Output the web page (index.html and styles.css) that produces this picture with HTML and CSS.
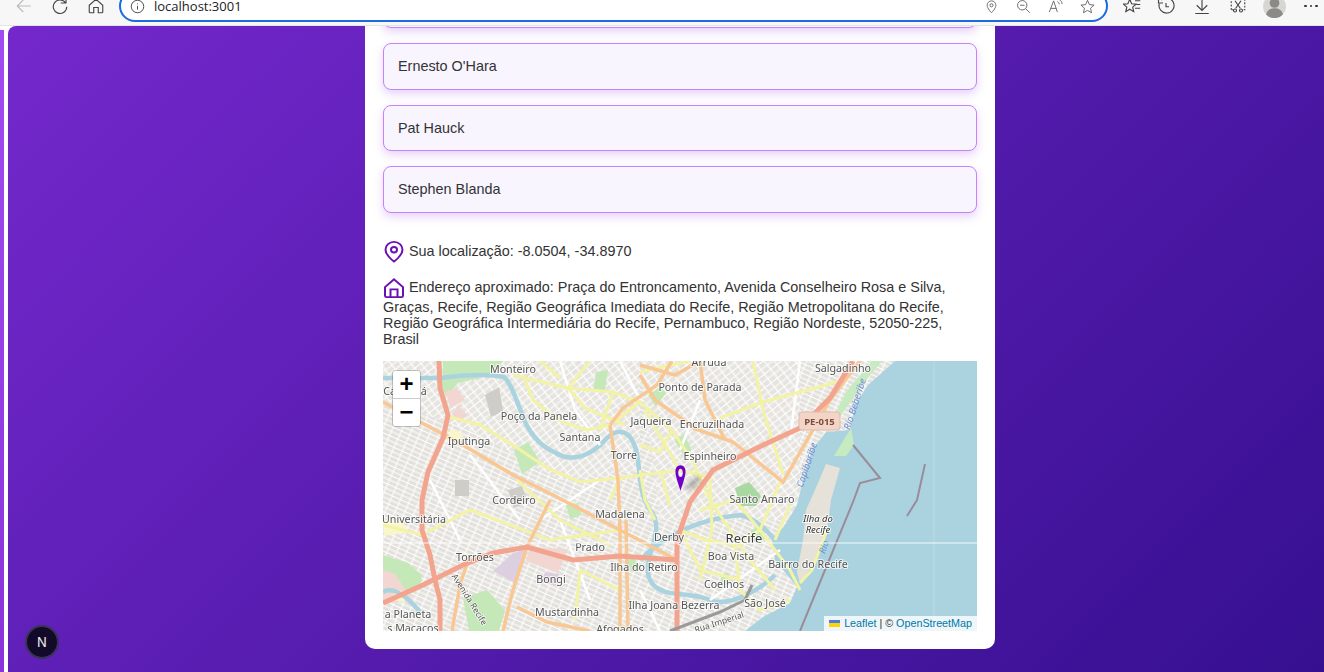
FILE: index.html
```html
<!DOCTYPE html>
<html lang="en">
<head>
  <meta charset="UTF-8">
  <title>localhost:3001</title>
  <link rel="stylesheet" href="styles.css">
</head>
<body>

<header class="toolbar">
  <div class="toolbar-row">
    <svg class="tool tool-back" viewBox="0 0 24 24"><path d="M21 12H4M11 4l-8 8 8 8"/></svg>
    <svg class="tool tool-reload" viewBox="0 0 24 24"><path d="M19.5 8A9 9 0 1 0 21 13M20 1v7h-7"/></svg>
    <svg class="tool tool-home" viewBox="0 0 24 24"><path d="M3 11l9-8 9 8v9a1 1 0 0 1-1 1h-5v-7H9v7H4a1 1 0 0 1-1-1z"/></svg>
    <div class="address">
      <svg class="tool-small" viewBox="0 0 24 24"><circle cx="12" cy="12" r="10"/><path d="M12 11v6M12 7v1.5"/></svg>
      <span class="url">localhost:3001</span>
      <div class="address-actions">
        <svg class="tool-small" viewBox="0 0 24 24"><path d="M12 22s-7-7-7-12a7 7 0 0 1 14 0c0 5-7 12-7 12z"/><circle cx="12" cy="10" r="2.5"/></svg>
        <svg class="tool-small" viewBox="0 0 24 24"><circle cx="10" cy="10" r="7.5"/><path d="M6.500 10h7M15.500 15.500L22 22"/></svg>
        <svg class="tool-small" viewBox="0 0 24 24"><path d="M2 21L9 3l6 18M4.500 15h9M15 4c2 1 3 2.500 3 4.500M18 1c3 1.500 4.500 4 4.500 7"/></svg>
        <svg class="tool-small" viewBox="0 0 24 24"><path d="M12 2l3 7 7.500.7-5.700 5 1.700 7.300-6.500-3.800L5.500 22l1.700-7.300-5.700-5L9 9z"/></svg>
      </div>
    </div>
    <svg class="tool tool-fav" viewBox="0 0 24 24"><path d="M9 3l2.500 6 6 .5-4.600 4 1.400 6L9 16.300 3.700 19.500l1.400-6-4.600-4 6-.5zM16 5h7M18 10h5M16 15h7"/></svg>
    <svg class="tool tool-history" viewBox="0 0 24 24"><path d="M6 4a10 10 0 1 1-3 5M2 2v6h6M12 8v5h4"/></svg>
    <svg class="tool tool-download" viewBox="0 0 24 24"><path d="M12 2v16M5 11l7 7 7-7M3 22h18"/></svg>
    <svg class="tool tool-shot" viewBox="0 0 24 24"><path class="dashed" d="M3 17V3h18v14h-3M6 17H3"/><path d="M8 5l7 10M16 5L9 15"/><circle cx="8" cy="18" r="2"/><circle cx="16" cy="18" r="2"/></svg>
    <div class="avatar">
      <svg viewBox="0 0 26 26"><circle cx="13" cy="13" r="13" fill="#d8d6d2"/><circle cx="13" cy="9" r="5.500" fill="#8c8a87"/><path d="M3.500 22c1-5 5-7 9.500-7s8.500 2 9.500 7a13 13 0 0 1-19 0z" fill="#8c8a87"/></svg>
      <span class="avatar-dot"></span>
    </div>
    <div class="more"><i></i><i></i><i></i></div>
  </div>
</header>

<div class="window">
  <div class="edge"></div>
  <main class="page">
    <div class="card">

      <ul class="people">
        <li>Hidden</li>
        <li>Ernesto O'Hara</li>
        <li>Pat Hauck</li>
        <li>Stephen Blanda</li>
      </ul>

      <p class="info info-location">
        <svg class="info-icon" viewBox="0 0 22 24" preserveAspectRatio="none"><path d="M11 22.500S2.500 15.500 2.500 9.500a8.500 8.500 0 0 1 17 0c0 6-8.500 13-8.500 13z"/><circle cx="11" cy="9.500" r="3"/></svg>
        Sua localização: -8.0504, -34.8970
      </p>

      <p class="info info-address">
        <svg class="info-icon" viewBox="0 0 22 24" preserveAspectRatio="none"><path d="M2 11l9-8.500 9 8.500v9.500a1.500 1.500 0 0 1-1.500 1.500h-15A1.500 1.500 0 0 1 2 20.500zM7.500 22v-8.500h7V22"/></svg>
        Endereço aproximado: Praça do Entroncamento, Avenida Conselheiro Rosa e Silva, Graças, Recife, Região Geográfica Imediata do Recife, Região Metropolitana do Recife, Região Geográfica Intermediária do Recife, Pernambuco, Região Nordeste, 52050-225, Brasil
      </p>

      <div class="map">
        <svg class="map-tiles" viewBox="383 361 594 270" preserveAspectRatio="none">
          <defs>
            <pattern id="streets" width="9" height="9" patternUnits="userSpaceOnUse" patternTransform="rotate(24)">
              <rect width="9" height="9" fill="#e3e1dc"/>
              <path d="M0 1h9M0 5.500h9M2 0v9" stroke="#fff" stroke-width="1.100"/>
            </pattern>
            <pattern id="streets2" width="8" height="11" patternUnits="userSpaceOnUse" patternTransform="rotate(-38)">
              <rect width="8" height="11" fill="#e6e4df"/>
              <path d="M0 1h8M0 6.500h8M4 0v11" stroke="#fff" stroke-width="1.200"/>
            </pattern>
          </defs>

          <rect x="383" y="361" width="594" height="270" fill="url(#streets)"/>
          <path d="M383 361H640V470L560 480 470 430 383 400z" fill="url(#streets2)"/>
          <path d="M640 361H800V520H660z" fill="url(#streets2)"/>

          <g class="areas">
            <path class="park" d="M443 361h60l-10 14-35 8-12 14-4-10z"/>
            <path class="park" d="M383 555l25 8 14 12-2 14-25 8-12 2z"/>
            <path class="park" d="M463 598l24-8 18 20-6 21h-30z"/>
            <path class="park" d="M514 450l14-8 12 20-18 12z"/>
            <path class="park-dark" d="M401 385h10v34h-10z"/>
            <path class="park-dark" d="M735 488l14-6 12 14-5 10-16 0z"/>
            <path class="park" d="M596 372l12-2-3 20-12 2z"/>
            <path class="park" d="M648 395l12-8 6 6-10 14z"/>
            <path class="park" d="M674 440l10-6 8 16-8 6z"/>
            <path class="park" d="M750 530l12-4 4 12-10 6z"/>
            <path class="park" d="M566 505l12-2 4 12-12 4zM470 372l8-2 2 8-8 2zM720 575l8-2 2 8-8 2zM626 560l8-2 8 12-10 2z"/>
            <path class="pink" d="M445 392l12-4 8 12-14 8zM458 405l9 10-8 8-7-8z"/>
            <path class="pink" d="M530 547l38 2-10 24-32-12z"/>
            <path class="pink" d="M383 570l12 4 18 26-30 4z"/>
            <path class="lilac" d="M513 553l14-4-12 34-22-12z"/>
            <path class="lilac" d="M545 572l14 2-2 12-16-4z"/>
            <path class="yellow" d="M452 428l12 8-10 10-8-6zM383 520h18l8 12-25 4zM396 590l12 2-4 10-12-2z"/>
            <path class="grey" d="M455 480h14v16h-14zM508 490l14-4 6 16-14 6zM485 395l14-8 4 24-12 6z"/>
          </g>

          <path class="sea" d="M895 361H977V631H745L763 617 790 603 797 587 775 560 772 540 785 525 797 505 803 480 812 450 826 432 850 430 855 405 868 385z"/>
          <path class="port" d="M826 464L840 468 831 500 827 530 813 565 800 583 797 572 803 540 806 510 815 490z"/>
          <path class="green-coast" d="M838 420L862 385 882 361H872L846 392 832 420zM834 456L851 428 854 445 846 456z"/>

          <g class="rivers">
            <path d="M383 378H440C470 374 490 374 504 377 512 384 516 400 522 414 528 432 540 446 556 453 570 462 590 458 607 438 618 428 628 430 634 444 642 462 636 490 650 510 668 530 640 560 650 580 660 600 690 590 710 600 728 608 760 590 775 575"/>
            <path d="M640 560C660 540 690 520 740 515 760 520 770 535 775 540"/>
            <path d="M383 592C395 585 410 600 420 612"/>
          </g>

          <g class="road-small">
            <path d="M560 361L575 410 600 445M470 455L520 520M540 520L600 480M620 361L640 400M560 520L590 600M640 590L660 631M700 400L680 450M800 361L790 440M430 480L460 540M710 600L780 550"/>
          </g>

          <g class="road-yellow">
            <path d="M450 417L480 425 513 445 547 468 580 482 620 478 680 470 712 478"/>
            <path d="M513 375L567 388 613 392 640 402 672 430 692 460 710 500 730 530 750 560 775 590"/>
            <path d="M523 375L533 400 557 420 587 430 610 425 640 402"/>
            <path d="M560 378L540 361M590 361L568 388 585 408 625 425M613 392L600 430"/>
            <path d="M753 361L763 410 783 475"/>
            <path d="M720 418L763 402 837 382"/>
            <path d="M690 361L640 372M640 470L645 500 655 520M660 470L670 505"/>
            <path d="M780 482L760 530 735 545 705 540 680 530M735 545L740 590 760 610 790 600M760 530L790 570 800 590"/>
            <path d="M710 480L712 530 700 580M680 530L700 570 740 580M790 505L775 540"/>
            <path d="M383 525L422 535 470 510 550 540 620 530M517 480L560 520 610 545M580 570L575 620M580 570L620 590"/>
            <path d="M827 530L812 570 800 583"/>
            <path d="M640 445L660 452 672 430M645 410L665 445 680 470M620 478L610 500M700 510L735 500 760 530"/>
          </g>

          <g class="road-orange">
            <path d="M383 402L463 445 513 475 553 495 620 530 677 560"/>
            <path d="M550 500L527 547 513 590 503 631"/>
            <path d="M517 607L547 622 590 631"/>
            <path d="M640 365L675 375 700 361"/>
            <path d="M700 361L705 400 725 440M693 428L733 442 753 458 783 482 830 400 860 361"/>
            <path d="M610 425L623 408 657 385 672 361M610 425L618 480 620 530 620 631M626 520L628 631"/>
            <path d="M640 375L655 400 695 428"/>
            <path d="M470 555L460 585 452 631"/>
          </g>

          <g class="road-motor">
            <path d="M439 361L440 388 448 415 443 438 428 472 422 500 422 530 430 555 435 580 440 600 440 631"/>
            <path d="M383 603L423 585 463 565 493 553 527 547 573 560 620 556 677 560"/>
            <path d="M677 631V540L690 502 713 470 757 448 800 428 830 398 853 361"/>
          </g>

          <g class="road-grey">
            <path d="M670 631L720 612 745 600 752 585"/>
          </g>

          <g class="breakwater">
            <path d="M853 445L880 478 860 483 853 502 825 570 800 631"/>
            <path d="M925 464L917 500 907 516"/>
          </g>

          <path class="shadow" d="M684 488L696 476 702 479 692 490z"/>
          <rect class="port-label" x="799" y="412" width="41" height="18" rx="3"/>

          <g class="labels">
            <text x="513" y="373">Monteiro</text>
            <text x="709" y="366">Arruda</text>
            <text x="843" y="372">Salgadinho</text>
            <text x="700" y="391">Ponto de Parada</text>
            <text x="405" y="395">Caxangá</text>
            <text x="539" y="420">Poço da Panela</text>
            <text x="651" y="425">Jaqueira</text>
            <text x="712" y="428">Encruzilhada</text>
            <text x="580" y="441">Santana</text>
            <text x="469" y="445">Iputinga</text>
            <text x="624" y="459">Torre</text>
            <text x="710" y="460">Espinheiro</text>
            <text x="762" y="503">Santo Amaro</text>
            <text x="514" y="504">Cordeiro</text>
            <text x="414" y="523">Universitária</text>
            <text x="620" y="518">Madalena</text>
            <text x="669" y="541">Derby</text>
            <text x="590" y="551">Prado</text>
            <text x="731" y="560">Boa Vista</text>
            <text x="475" y="561">Torrões</text>
            <text x="644" y="571">Ilha do Retiro</text>
            <text x="808" y="568">Bairro do Recife</text>
            <text x="551" y="583">Bongi</text>
            <text x="724" y="588">Coelhos</text>
            <text x="765" y="607">São José</text>
            <text x="567" y="616">Mustardinha</text>
            <text x="674" y="609">Ilha Joana Bezerra</text>
            <text x="408" y="618">a Planeta</text>
            <text x="413" y="632">s Macacos</text>
            <text x="620" y="633">Afogados</text>
            <text class="label-big" x="744" y="543">Recife</text>
            <text class="label-island" x="818" y="522">Ilha do</text>
            <text class="label-island" x="818" y="533">Recife</text>
            <text class="label-route" x="819.500" y="425">PE-015</text>
            <text class="label-water" transform="translate(858 405) rotate(-72)">Rio Beberibe</text>
            <text class="label-water" transform="translate(810 466) rotate(-72)">Capibaribe</text>
            <text class="label-water" transform="translate(827 548) rotate(-72)">Rio</text>
            <text class="label-street" transform="translate(467 601) rotate(58)">Avenida Recife</text>
            <text class="label-street" transform="translate(720 625) rotate(-18)">Rua Imperial</text>
          </g>

          <path class="seam-h" d="M383 543H977"/>
          <path class="seam-v" d="M934 361V631"/>
        </svg>

        <svg class="marker" viewBox="0 0 12 28"><path fill-rule="evenodd" d="M6 0C2.500 0 .5 3 .5 7 .5 12 4 22 6 28 8 22 11.500 12 11.500 7 11.500 3 9.500 0 6 0zM6 4C7.500 4 8.500 6 8.500 8.500 8.500 11 7.500 13 6 13 4.500 13 3.500 11 3.500 8.500 3.500 6 4.500 4 6 4z"/></svg>

        <div class="zoom">
          <button class="zoom-btn">+</button>
          <button class="zoom-btn">−</button>
        </div>

        <div class="attribution">
          <span class="flag"></span>
          <a href="#">Leaflet</a> | © <a href="#">OpenStreetMap</a>
        </div>
      </div>

    </div>
  </main>
  <button class="next-badge">N</button>
</div>

</body>
</html>
```

FILE: styles.css
```css
* {
  box-sizing: border-box;
}
html, body {
  height: 100%;
}
body {
  margin: 0;
  overflow: hidden;
  font-family: "Liberation Sans", Arial, sans-serif;
  background: #fff;
  color: #333;
}

/* browser toolbar */
.toolbar {
  height: 26px;
  overflow: hidden;
  background: #f7f7f7;
  border-bottom: 1px solid #e4e4e4;
}
.toolbar-row {
  display: flex;
  align-items: center;
  height: 40px;
  margin-top: -14px;
  padding-left: 15px;
}
.tool, .tool-small {
  flex: none;
  fill: none;
  stroke: #444;
  stroke-width: 1.500;
}
.tool {
  width: 18px;
  height: 18px;
}
.tool-small {
  width: 15px;
  height: 15px;
}
.tool-back {
  stroke: #bbb;
}
.tool-reload {
  margin-left: 18px;
}
.tool-home {
  margin-left: 18px;
}
.address {
  flex: none;
  display: flex;
  align-items: center;
  width: 989px;
  height: 32px;
  margin-left: 14px;
  padding: 0 11px 0 9px;
  background: #fff;
  border: 2px solid #1b6ae0;
  border-radius: 16px;
}
.url {
  margin-left: 9px;
  font-family: "Open Sans", sans-serif;
  font-size: 13px;
  color: #222;
}
.address-actions {
  display: flex;
  gap: 17px;
  margin-left: auto;
}
.address-actions .tool-small {
  stroke: #666;
}
.tool-fav {
  margin-left: 15px;
}
.tool-history {
  margin-left: 16px;
}
.tool-download, .tool-shot {
  margin-left: 18px;
}
.dashed {
  stroke-dasharray: 2.500 2;
}
.avatar {
  position: relative;
  flex: none;
  width: 23px;
  height: 23px;
  margin-left: 16px;
}
.avatar svg {
  display: block;
  width: 100%;
  height: 100%;
}
.avatar-dot {
  position: absolute;
  top: 0;
  right: -1px;
  width: 4px;
  height: 4px;
  background: #e0362c;
  border-radius: 50%;
}
.more {
  display: flex;
  gap: 3px;
  margin-left: 18px;
}
.more i {
  width: 2.500px;
  height: 2.500px;
  background: #333;
  border-radius: 50%;
}

/* page area */
.window {
  position: relative;
  display: flex;
  height: calc(100% - 26px);
  background: #fff;
}
.edge {
  flex: none;
  width: 3.500px;
  margin: 4px 4.500px 0 0;
  background: linear-gradient(180deg, #a24bf2, #8a33dc);
}
.page {
  flex: 1;
  display: flex;
  justify-content: center;
  align-items: flex-start;
  padding-left: 28px;
  overflow: hidden;
  background: linear-gradient(135deg, #7428cc 0%, #360f90 100%);
  border-top-left-radius: 8px;
}
.card {
  width: 630px;
  padding: 0 18px 18px;
  background: #fff;
  border-radius: 0 0 10px 10px;
  overflow: hidden;
}

.people {
  display: flex;
  flex-direction: column;
  gap: 14.900px;
  margin: -44.100px 0 0;
  padding: 0;
  list-style: none;
}
.people li {
  height: 46.500px;
  padding: 0 14px;
  font-size: 14.400px;
  line-height: 45px;
  color: #333;
  background: #f8f5ff;
  border: 1px solid #c084fc;
  border-radius: 8px;
  box-shadow: 0 4px 10px rgba(147, 51, 234, 0.22);
}

.info {
  margin: 0;
  font-size: 14.400px;
}
.info-location {
  margin-top: 28.200px;
}
.info-address {
  margin-top: 14px;
}
.info-icon {
  width: 22px;
  height: 22px;
  vertical-align: middle;
  fill: none;
  stroke: #6b11b4;
  stroke-width: 2;
}

/* map */
.map {
  position: relative;
  height: 270px;
  margin-top: 14px;
  overflow: hidden;
  background: #dedbd5;
}
.map-tiles {
  display: block;
  width: 100%;
  height: 100%;
  filter: blur(0.4px);
}
.park { fill: #c5e8b8; }
.park-dark { fill: #a9d8a0; }
.pink { fill: #f2d6d2; }
.lilac { fill: #dccfe0; }
.yellow { fill: #fbf6c8; }
.grey { fill: #cfcdc8; }
.sea { fill: #aad3df; }
.port { fill: #e6e2da; }
.green-coast { fill: #c6ebc0; }
.rivers path {
  fill: none;
  stroke: #aad3df;
  stroke-width: 4.500;
}
.road-small path {
  fill: none;
  stroke: #fff;
  stroke-width: 2.500;
}
.road-yellow path {
  fill: none;
  stroke: #f3f3a6;
  stroke-width: 3;
}
.road-orange path {
  fill: none;
  stroke: #f8c793;
  stroke-width: 3.500;
}
.road-motor path {
  fill: none;
  stroke: #f3a48e;
  stroke-width: 5;
}
.road-grey path {
  fill: none;
  stroke: #9a9a9a;
  stroke-width: 3;
}
.breakwater path {
  fill: none;
  stroke: #9a8c9b;
  stroke-width: 2;
}
.shadow {
  fill: rgba(60, 60, 50, 0.35);
  filter: blur(2px);
}
.port-label {
  fill: #f3d5c8;
  stroke: #e3b9a8;
}
.labels text {
  font-family: "Noto Sans", sans-serif;
  font-size: 10.700px;
  text-anchor: middle;
  fill: #555;
  stroke: rgba(255, 255, 255, 0.75);
  stroke-width: 2px;
  paint-order: stroke;
}
.labels .label-big {
  font-size: 13px;
  fill: #3a3a3a;
}
.labels .label-island {
  font-size: 9.500px;
  font-style: italic;
  fill: #333;
}
.labels .label-route {
  font-size: 9.500px;
  font-weight: 700;
  fill: #7d4b3c;
  stroke: none;
}
.labels .label-water {
  font-size: 9.500px;
  font-style: italic;
  fill: #6c8fd8;
  stroke: none;
}
.labels .label-street {
  font-size: 8.500px;
  fill: #555;
  stroke-width: 1.500px;
}
.seam-h {
  stroke: #fff;
  stroke-width: 1;
  opacity: 0.85;
}
.seam-v {
  stroke: #fff;
  stroke-width: 1;
  opacity: 0.2;
}
.marker {
  position: absolute;
  left: 292px;
  top: 103px;
  width: 11px;
  height: 28px;
  fill: #7000c8;
}
.zoom {
  position: absolute;
  left: 10px;
  top: 10px;
  display: flex;
  flex-direction: column;
  width: 27px;
  height: 55px;
  background: #fff;
  border-radius: 3px;
  box-shadow: 0 0 0 1px rgba(0, 0, 0, 0.2);
  overflow: hidden;
}
.zoom-btn {
  flex: 1;
  padding: 0;
  border: 0;
  background: #fff;
  font-family: "Liberation Sans", sans-serif;
  font-size: 24px;
  font-weight: 700;
  line-height: 26px;
  color: #000;
}
.zoom-btn + .zoom-btn {
  border-top: 1px solid #ccc;
}
.attribution {
  position: absolute;
  right: 0;
  bottom: 0;
  height: 15px;
  padding: 0 5px;
  font-size: 10.750px;
  line-height: 15px;
  color: #333;
  background: rgba(255, 255, 255, 0.8);
}
.attribution a {
  color: #0078a8;
  text-decoration: none;
}
.flag {
  display: inline-block;
  width: 11px;
  height: 7px;
  margin-right: 1px;
  background: linear-gradient(180deg, #4c7be1 50%, #ffd500 50%);
}
.next-badge {
  position: absolute;
  left: 25px;
  top: 599px;
  width: 34px;
  height: 34px;
  padding: 0;
  font-family: "Inter", sans-serif;
  font-size: 13px;
  font-weight: 400;
  color: #eee;
  background: #120a28;
  border: 2px solid #3a3456;
  border-radius: 50%;
}
```
